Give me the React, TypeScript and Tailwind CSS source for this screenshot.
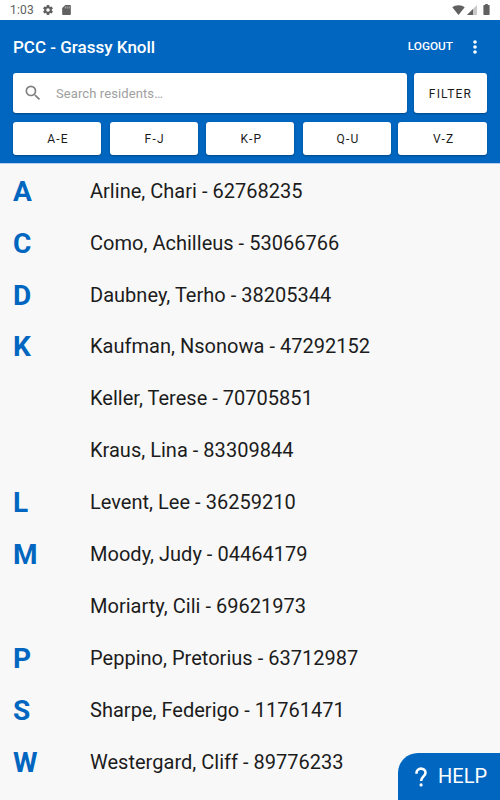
import { useState } from 'react';

interface Resident {
  name: string;
  id: string;
}

const residents: Resident[] = [
  { name: 'Arline, Chari', id: '62768235' },
  { name: 'Como, Achilleus', id: '53066766' },
  { name: 'Daubney, Terho', id: '38205344' },
  { name: 'Kaufman, Nsonowa', id: '47292152' },
  { name: 'Keller, Terese', id: '70705851' },
  { name: 'Kraus, Lina', id: '83309844' },
  { name: 'Levent, Lee', id: '36259210' },
  { name: 'Moody, Judy', id: '04464179' },
  { name: 'Moriarty, Cili', id: '69621973' },
  { name: 'Peppino, Pretorius', id: '63712987' },
  { name: 'Sharpe, Federigo', id: '11761471' },
  { name: 'Westergard, Cliff', id: '89776233' },
];

const ranges = ['A-E', 'F-J', 'K-P', 'Q-U', 'V-Z'];

function StatusBar() {
  return (
    <div className="flex h-5 shrink-0 items-center bg-white pl-[10px] pr-[10px] text-[#606060]">
      <span className="w-[32px] text-xs leading-5 tracking-[0.2px]">1:03</span>
      {/* Settings */}
      <svg className="h-3 w-3" viewBox="0 0 24 24" fill="currentColor">
        <path d="M19.43 12.98c.04-.32.07-.64.07-.98s-.03-.66-.07-.98l2.11-1.65c.19-.15.24-.42.12-.64l-2-3.46c-.12-.22-.39-.3-.61-.22l-2.49 1c-.52-.4-1.08-.73-1.69-.98l-.38-2.65A.49.49 0 0 0 14 2h-4c-.25 0-.46.18-.49.42l-.38 2.65c-.61.25-1.17.59-1.69.98l-2.49-1c-.23-.09-.49 0-.61.22l-2 3.46c-.13.22-.07.49.12.64l2.11 1.65c-.04.32-.07.65-.07.98s.03.66.07.98l-2.11 1.65c-.19.15-.24.42-.12.64l2 3.46c.12.22.39.3.61.22l2.49-1c.52.4 1.08.73 1.69.98l.38 2.65c.03.24.24.42.49.42h4c.25 0 .46-.18.49-.42l.38-2.65c.61-.25 1.17-.59 1.69-.98l2.49 1c.23.09.49 0 .61-.22l2-3.46c.12-.22.07-.49-.12-.64zM12 15.5a3.5 3.5 0 1 1 0-7 3.5 3.5 0 0 1 0 7z" />
      </svg>
      {/* SD card */}
      <svg className="ml-[6px] h-3 w-[13px]" viewBox="0 0 24 24" preserveAspectRatio="none" fill="currentColor">
        <path d="M18 2h-8L4 8v12c0 1.100.9 2 2 2h12c1.100 0 2-.9 2-2V4c0-1.100-.9-2-2-2z" />
        <path d="M9 5h2v4H9zM12.500 5h2v4h-2zM16 5h2v4h-2z" fill="#aaa" />
      </svg>
      <div className="ml-auto flex items-center pb-[1px]">
        {/* Wifi */}
        <svg className="h-[10px] w-[13px]" viewBox="0 0 13 10" fill="currentColor">
          <path d="M6.500 10 0.300 2.300C1.800 1 4 0.200 6.500 0.200s4.700.8 6.200 2.100z" />
        </svg>
        {/* Signal */}
        <svg className="ml-[2px] h-[10px] w-[10px]" viewBox="0 0 10 10">
          <path d="M0 10 10 0v10z" fill="#c8c8c8" />
          <path d="M0 10 6 4v6z" fill="currentColor" />
        </svg>
        {/* Battery */}
        <svg className="ml-[6px] h-[11px] w-[7px]" viewBox="0 0 7 11" fill="currentColor">
          <path d="M2.200 0h2.600v1.100h1.200q.6 0 .6.600v8.600q0 .6-.6.600H1q-.6 0-.6-.6V1.700q0-.6.6-.6h1.200z" />
        </svg>
      </div>
    </div>
  );
}

function Header() {
  const [query, setQuery] = useState('');

  return (
    <header className="h-[143px] shrink-0 bg-[#0066c0] px-[13px] shadow-[0_1px_0_#b9cff0]">
      <div className="flex h-[53px] items-center text-white">
        <h1 className="pt-[2px] text-[17px] font-medium">PCC - Grassy Knoll</h1>
        <button className="ml-auto text-[11.8px] font-medium">LOGOUT</button>
        <button
          className="ml-[15px] mr-[5px] flex h-5 w-[14px] items-center justify-center"
          aria-label="More options"
        >
          <svg className="h-[14px] w-1" viewBox="0 0 4 14" fill="currentColor">
            <circle cx="2" cy="2" r="1.800" />
            <circle cx="2" cy="7" r="1.800" />
            <circle cx="2" cy="12" r="1.800" />
          </svg>
        </button>
      </div>

      {/* Search */}
      <div className="flex h-10 gap-[7px]">
        <label className="flex flex-1 items-center rounded-[3px] bg-white pl-[10px] shadow-[0_1px_2px_rgba(0,0,0,0.3)]">
          <svg className="h-5 w-5 text-[#808080]" viewBox="0 0 24 24" fill="currentColor">
            <path d="M15.500 14h-.79l-.28-.27A6.471 6.471 0 0 0 16 9.500 6.500 6.500 0 1 0 9.500 16c1.610 0 3.090-.59 4.230-1.570l.27.28v.79l5 4.990L20.490 19zm-6 0C7.010 14 5 11.990 5 9.500S7.010 5 9.500 5 14 7.010 14 9.500 11.990 14 9.500 14z" />
          </svg>
          <input
            className="ml-[13px] w-[300px] pt-[1px] text-[13px] tracking-[0.1px] text-black outline-none placeholder:text-[#a0a0a0]"
            placeholder="Search residents…"
            value={query}
            onChange={(e) => setQuery(e.target.value)}
          />
        </label>
        <button className="w-[73px] rounded-[3px] bg-white pt-[1px] text-[12px] tracking-[1.2px] text-[#1c1c1c] shadow-[0_1px_2px_rgba(0,0,0,0.3)]">
          FILTER
        </button>
      </div>

      {/* Alphabet ranges */}
      <div className="mt-[9px] flex h-[33px] gap-[8.7px]">
        {ranges.map((range) => (
          <button
            key={range}
            className="w-[88px] rounded-[3px] bg-white pt-[1px] pl-[2px] text-[12px] tracking-[1.2px] text-[#1c1c1c] shadow-[0_1px_2px_rgba(0,0,0,0.3)] last:-ml-[1.3px] last:w-[88.500px]"
          >
            {range}
          </button>
        ))}
      </div>
    </header>
  );
}

export default function App() {
  return (
    <div className="relative flex h-[800px] w-[500px] flex-col overflow-hidden bg-[#f8f8f8] font-[Roboto,sans-serif]">
      <StatusBar />
      <Header />

      <ul className="pt-[1.8px]">
        {residents.map((resident, index) => {
          const letter = resident.name[0];
          const isFirst = index === 0 || residents[index - 1].name[0] !== letter;
          return (
            <li key={resident.id} className="flex h-[51.9px] items-center pl-[13px]">
              <span className="w-[77px] pt-[2px] text-[28px] leading-none font-bold text-[#0066c0]">
                {isFirst && letter}
              </span>
              <span className="text-[20px] tracking-[0.02px] text-[#1c1c1c]">
                {resident.name} - {resident.id}
              </span>
            </li>
          );
        })}
      </ul>

      {/* Help */}
      <button className="absolute right-0 bottom-0 flex h-[47px] w-[102px] items-center rounded-tl-[20px] bg-[#0066c0] pb-[1px] pl-[17px] text-white">
        <svg className="mt-[1px] h-5 w-3" viewBox="0 0 12 20" fill="none" stroke="currentColor">
          <path d="M1.500 6.700V6C1.500 3.400 3.500 1.600 6 1.600s4.500 1.800 4.500 4.100c0 3.600-4.400 3.900-4.400 8.300" strokeWidth="2.600" />
          <circle cx="6.100" cy="17.900" r="1.600" fill="currentColor" stroke="none" />
        </svg>
        <span className="ml-[11px] text-[20px]">HELP</span>
      </button>
    </div>
  );
}
